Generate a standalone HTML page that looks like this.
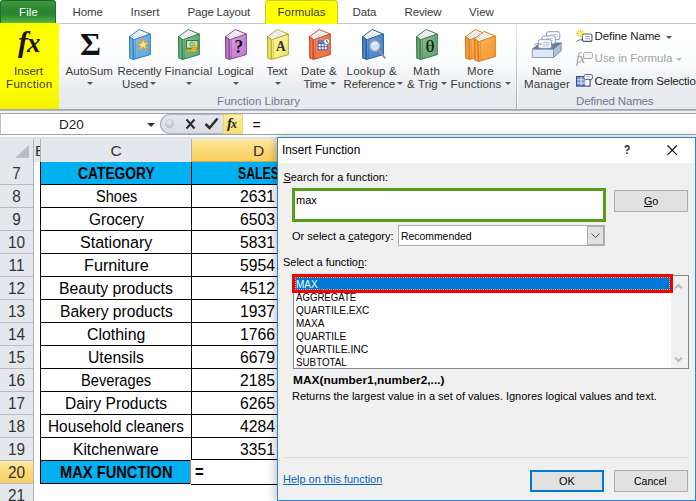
<!DOCTYPE html>
<html lang="en">
<head>
<meta charset="utf-8">
<title>Insert Function</title>
<style>
html,body{margin:0;padding:0;}
body{width:696px;height:501px;overflow:hidden;position:relative;background:#fff;font-family:"Liberation Sans",sans-serif;color:#222;}
.a{position:absolute;}
.t{position:absolute;white-space:nowrap;line-height:1;}
.c{text-align:center;}
/* ---------- tabs ---------- */
#tabs{left:0;top:0;width:696px;height:23px;background:#fff;}
#tabline{left:0;top:23px;width:696px;height:1px;background:#c4c8cc;}
.tab{font-size:11.4px;color:#3b3b3b;top:6px;}
#filetab{left:0;top:0;width:56px;height:23px;border-radius:4px 4px 0 0;background:linear-gradient(#3f9c40 0,#2c8431 45%,#2b8430 62%,#55b446 100%);box-shadow:inset 0 1px 0 #1d6530,inset 1px 0 0 #1f6a2c,inset -1px 0 0 #1f6a2c;}
#formtab{left:265px;top:0;width:73px;height:24px;border-radius:4px 4px 0 0;background:#ffff00;box-shadow:inset 0 1px 0 #c9c93a,inset 1px 0 0 #c9c93a,inset -1px 0 0 #c9c93a;}
/* ---------- ribbon ---------- */
#ribbon{left:0;top:24px;width:696px;height:85px;background:linear-gradient(#ffffff 0,#fbfcfd 45%,#eceef1 70%,#e6e9ed 100%);}
#ribyel{left:0;top:23px;width:59px;height:86px;background:linear-gradient(#ffff00 0,#ffff00 70%,#f2f200 100%);}
#ribbot{left:0;top:109px;width:696px;height:2px;background:linear-gradient(#979ca3,#bfc3c9);}
#ribgap{left:0;top:111px;width:696px;height:3px;background:#eef0f3;}
.rl{font-size:11.4px;color:#3b3b3b;}
.grp{font-size:11.4px;color:#6a7a90;}
.arr{width:0;height:0;border-left:3px solid transparent;border-right:3px solid transparent;border-top:3px solid #555;}
/* ---------- formula bar ---------- */
#fbar{left:0;top:114px;width:696px;height:20px;background:#fff;}
#fbot{left:0;top:134px;width:696px;height:5px;background:#dfe3e8;}
#fbot2{left:0;top:135px;width:696px;height:2px;background:#fbfcfd;}
/* ---------- grid ---------- */
#colhdr{left:0;top:139px;width:277px;height:23px;background:#e4e7eb;}
#rowhdr{left:0;top:162px;width:33px;height:339px;background:#e4e7eb;}
.rh{left:0;width:33px;text-align:center;font-size:15.5px;color:#333;}
.rline{left:0;width:33px;height:1px;background:#b8bcc2;}
.cell{font-size:15.5px;color:#000;}
.hl{background:#000;}
/* ---------- dialog ---------- */
#dlg{left:278px;top:138px;width:417px;height:362px;background:#f0f0f0;box-shadow:0 0 0 1px #2b83d4,0 2px 10px 2px rgba(0,0,0,.28);}
#dtitle{left:278px;top:138px;width:417px;height:25px;background:#fff;}
.d{font-size:11px;color:#000;}
.btn{background:#e1e1e1;border:1px solid #adadad;box-sizing:border-box;}
u{text-decoration:underline;}
</style>
</head>
<body>
<!-- tabs -->
<div id="tabs" class="a"></div>
<div id="tabline" class="a"></div>
<div id="filetab" class="a"></div>
<div id="formtab" class="a"></div>

<!-- ribbon -->
<div id="ribbon" class="a"></div>
<div id="ribyel" class="a"></div>
<div id="ribbot" class="a"></div>
<div id="ribgap" class="a"></div>



<svg width="0" height="0" style="position:absolute">
 <defs>
  <linearGradient id="bg" x1="0" y1="0" x2="1" y2="1"><stop offset="0" stop-color="#fff" stop-opacity=".28"/><stop offset=".55" stop-color="#fff" stop-opacity="0"/><stop offset="1" stop-color="#000" stop-opacity=".12"/></linearGradient>
  <symbol id="book" viewBox="0 0 23 31" preserveAspectRatio="none">
   <polygon points="0.6,7.6 10.6,0.5 22.2,5 5,10.8" fill="#fdfdfd" stroke="var(--o)" stroke-width="1" stroke-linejoin="round"/>
   <path d="M3,7.6 L11,2.2 M5,8.6 L13,3 M8,8.8 L16,3.8" stroke="#b9bcc0" stroke-width=".6" fill="none"/>
   <polygon points="0.5,7.6 4.9,10.8 4.9,30.4 0.8,29.2" fill="var(--s)" stroke="var(--o)" stroke-width="1" stroke-linejoin="round"/>
   <polygon points="4.9,10.8 22.3,5 22.3,25.6 4.9,30.4" fill="var(--f)" stroke="var(--o)" stroke-width="1" stroke-linejoin="round"/>
   <polygon points="4.9,10.8 22.3,5 22.3,25.6 4.9,30.4" fill="url(#bg)"/>
   <path d="M6.8,10.6 L6.8,29.6" stroke="var(--o)" stroke-width=".7" opacity=".6"/>
   <path d="M2.2,9.2 L2.4,29.4" stroke="#fff" stroke-width=".7" opacity=".45"/>
  </symbol>
 </defs>
</svg>
<!-- Insert Function -->
<div class="t" style="left:18px;top:27px;font-family:'Liberation Serif',serif;font-style:italic;font-weight:bold;font-size:30px;color:#15150a;letter-spacing:0px;">f<span style="font-size:27px;margin-left:-1px;">x</span></div>
<!-- AutoSum -->
<div class="t" style="left:80px;top:28px;font-family:'Liberation Serif',serif;font-weight:bold;font-size:32px;color:#111;">&#931;</div>
<!-- Recently Used -->
<svg class="a" style="left:129px;top:29px;--f:#67aede;--s:#4f99d2;--o:#2c7abf" width="22" height="31" viewBox="0 0 23 31" preserveAspectRatio="none"><use href="#book" width="23" height="31"/><polygon points="14.6,9.2 16.4,13.6 21,13.4 17.4,16.4 18.8,21 14.6,18.4 10.6,21.8 11.8,17 8.4,14.6 12.9,14.2" fill="#fdd263" stroke="#e09a1c" stroke-width=".9" stroke-linejoin="round"/><polygon points="14.6,12 15.6,14.6 18,14.6 16,16.2 16.8,18.6 14.6,17.2 12.6,18.8 13.2,16.4 11.4,15.2 13.8,15" fill="#fee79a"/></svg>
<!-- Financial -->
<svg class="a" style="left:178px;top:29px;--f:#66ad76;--s:#4f9c62;--o:#2f7f46" width="22" height="31" viewBox="0 0 23 31" preserveAspectRatio="none"><use href="#book" width="23" height="31"/><rect x="8.8" y="11.6" width="12" height="7.6" fill="#d3ebcc" stroke="#2e7a3e" stroke-width="1.1"/><ellipse cx="14.8" cy="15.4" rx="3" ry="2.2" fill="#9fd094" stroke="#4f9a58" stroke-width=".6"/><rect x="15.2" y="16.6" width="5.2" height="1.9" rx=".6" fill="#f7c64c" stroke="#c98a12" stroke-width=".5"/><rect x="14.2" y="18.6" width="5.6" height="1.9" rx=".6" fill="#f2b430" stroke="#c98a12" stroke-width=".5"/><rect x="13.4" y="20.6" width="5.8" height="1.9" rx=".6" fill="#f7c64c" stroke="#c98a12" stroke-width=".5"/><rect x="9" y="21.2" width="4.2" height="1.8" rx=".6" fill="#f2b430" stroke="#c98a12" stroke-width=".5"/></svg>
<!-- Logical -->
<svg class="a" style="left:225px;top:29px;--f:#c784d2;--s:#a95cb8;--o:#8a429a" width="22" height="31" viewBox="0 0 23 31" preserveAspectRatio="none"><use href="#book" width="23" height="31"/><text x="14.5" y="24" font-family="Liberation Serif,serif" font-weight="bold" font-size="18" text-anchor="middle" fill="#111">?</text></svg>
<!-- Text -->
<svg class="a" style="left:267px;top:29px;--f:#f6f07c;--s:#e2d84a;--o:#b3a624" width="22" height="31" viewBox="0 0 23 31" preserveAspectRatio="none"><use href="#book" width="23" height="31"/><text x="14.5" y="22.5" font-family="Liberation Serif,serif" font-weight="bold" font-size="14" text-anchor="middle" fill="#333">A</text></svg>
<!-- Date & Time -->
<svg class="a" style="left:309px;top:29px;--f:#f0754a;--s:#e05a2c;--o:#d0481c" width="22" height="31" viewBox="0 0 23 31" preserveAspectRatio="none"><use href="#book" width="23" height="31"/><rect x="9.6" y="12" width="9.4" height="8.8" fill="#fff" stroke="#3a56a0" stroke-width=".9"/><rect x="9.6" y="12" width="9.4" height="2.6" fill="#4f7fe0"/><path d="M9.6,14.6H19M9.6,17.7H19M12.7,14.6V20.8M15.9,14.6V20.8" stroke="#3a56a0" stroke-width=".9"/><circle cx="18.6" cy="12.6" r="3.2" fill="#fff" stroke="#666" stroke-width=".8"/><path d="M18.6,10.6V12.8L20.2,13.6" stroke="#111" stroke-width=".8" fill="none"/></svg>
<!-- Lookup & Reference -->
<svg class="a" style="left:362px;top:29px;--f:#4c88ca;--s:#2f6cb4;--o:#245c9e" width="24" height="31" viewBox="0 0 25 31" preserveAspectRatio="none"><use href="#book" width="23" height="31"/><circle cx="13.5" cy="17" r="5.4" fill="#cfe3f7" stroke="#9a9fa8" stroke-width="1.4"/><path d="M10.5,15.5 Q13,13.4 16,14.8" stroke="#fff" stroke-width="1.2" fill="none" opacity=".9"/><path d="M17.6,21.2 L23.6,28.6" stroke="#8e939b" stroke-width="2.1" stroke-linecap="round"/></svg>
<!-- Math & Trig -->
<svg class="a" style="left:416px;top:29px;--f:#6caa74;--s:#4c9058;--o:#3a7c48" width="22" height="31" viewBox="0 0 23 31" preserveAspectRatio="none"><use href="#book" width="23" height="31"/><text x="10" y="23" font-family="Liberation Serif,serif" font-size="17.5" textLength="9.5" lengthAdjust="spacingAndGlyphs" fill="#111">&#952;</text></svg>
<!-- More Functions -->
<svg class="a" style="left:465px;top:29px;--f:#f7a03c;--s:#ee8a1e;--o:#da7a14" width="22" height="31" viewBox="0 0 23 31" preserveAspectRatio="none"><use href="#book" width="23" height="31"/></svg>
<svg class="a" style="left:474px;top:31px;--f:#f7a03c;--s:#ee8a1e;--o:#da7a14" width="22" height="31" viewBox="0 0 23 31" preserveAspectRatio="none"><use href="#book" width="23" height="31"/></svg>
<!-- separator -->
<div class="a" style="left:517px;top:24px;width:1px;height:85px;background:#fff;"></div>
<div class="a" style="left:516px;top:24px;width:1px;height:85px;background:linear-gradient(#e8eaed,#c3c8ce 50%,#a3a9b1);"></div>
<!-- Name Manager -->
<svg class="a" style="left:531px;top:29px;" width="32" height="30" viewBox="0 0 32 30">
 <polygon points="1.3,20.2 8.6,13.9 30.2,13.9 22.5,20.2" fill="#6d819e" stroke="#5f7594" stroke-width=".8" stroke-linejoin="round"/>
 <polygon points="22.5,20.2 30.2,13.9 30.2,21.8 22.5,28.5" fill="#aebfd8" stroke="#6d819e" stroke-width=".8" stroke-linejoin="round"/>
 <rect x="15.5" y="2.7" width="13.3" height="8" rx="2" fill="#fff" stroke="#7f90aa" stroke-width=".9"/>
 <path d="M20,5.4H26.5M20,7.6H26.5" stroke="#a9b5c8" stroke-width=".8"/>
 <rect x="11" y="6.9" width="13.3" height="8" rx="2" fill="#fff" stroke="#7f90aa" stroke-width=".9"/>
 <path d="M15.5,9.6H22M15.5,11.8H22" stroke="#a9b5c8" stroke-width=".8"/>
 <rect x="7.2" y="10.7" width="13.3" height="8.6" rx="2" fill="#fff" stroke="#7f90aa" stroke-width=".9"/>
 <path d="M12,13.4H18.5M12,15.2H18.5M12,17H18.5" stroke="#9fadc2" stroke-width=".8"/>
 <circle cx="9.6" cy="15" r=".9" fill="#7f90aa"/>
 <path d="M3,16 Q5,13.5 8.5,15" stroke="#7f90aa" stroke-width=".8" fill="none"/>
 <polygon points="1.3,20.2 22.5,20.2 22.5,28.5 1.3,28.5" fill="#dfe8f5" stroke="#7387a5" stroke-width=".8" stroke-linejoin="round"/>
</svg>
<!-- Define Name -->
<svg class="a" style="left:576px;top:29px;" width="17" height="15" viewBox="0 0 17 15"><rect x="6.4" y="5" width="9.6" height="7.4" rx="2" fill="#fff" stroke="#4f6180" stroke-width="1.1"/><path d="M9,7.6H14M9,9.8H14" stroke="#8a99b2" stroke-width=".8"/><path d="M.3,12.5 Q3,10.5 6.4,10.6" stroke="#4f6180" stroke-width=".9" fill="none"/><path d="M4.4,.4V8.4M.4,4.4H8.4M1.6,1.6L7.2,7.2M7.2,1.6L1.6,7.2" stroke="#f2c500" stroke-width="1.1"/><circle cx="4.4" cy="4.4" r="1.6" fill="#fff3a0"/></svg>
<!-- Use in Formula -->
<div class="t" style="left:576px;top:52px;font-family:'Liberation Serif',serif;font-style:italic;font-size:14px;color:#9a9a9a;letter-spacing:-1px;">fx</div>
<svg class="a" style="left:583px;top:52px;" width="10" height="8" viewBox="0 0 10 8"><rect x=".5" y=".5" width="9" height="6" rx="1.5" fill="#f4f4f4" stroke="#b0b0b0" stroke-width="1"/></svg>
<!-- Create from Selection -->
<svg class="a" style="left:576px;top:74px;" width="17" height="13" viewBox="0 0 17 13"><rect x=".5" y="2.5" width="13.5" height="9.5" fill="#6d8fd0" stroke="#3b4f8a" stroke-width=".9"/><rect x="9.5" y="5.8" width="4.5" height="6.2" fill="#fff"/><path d="M.5,5.8H14M.5,9H14M5,2.5V12M9.5,2.5V12" stroke="#eef2fa" stroke-width=".9"/><rect x=".5" y="2.5" width="13.5" height="9.5" fill="none" stroke="#3b4f8a" stroke-width=".9"/><rect x="8" y=".6" width="8.4" height="5" rx="1.6" fill="#fff" stroke="#4f6180" stroke-width="1"/><path d="M10,2.4H14.5M10,4H14.5" stroke="#9fadc2" stroke-width=".6"/></svg>


<div class="t rl" style="left:14.1px;top:66px;font-size:11.5px;letter-spacing:0.007px;">Insert</div>
<div class="t rl" style="left:6.1px;top:79px;font-size:11.5px;letter-spacing:0.274px;">Function</div>
<div class="t rl" style="left:65.6px;top:66px;font-size:11.5px;letter-spacing:-0.000px;">AutoSum</div>
<div class="t rl" style="left:117.6px;top:66px;font-size:11.5px;letter-spacing:-0.118px;">Recently</div>
<div class="t rl" style="left:122.1px;top:79px;font-size:11.5px;letter-spacing:-0.261px;">Used</div>
<div class="t rl" style="left:164.6px;top:66px;font-size:11.5px;letter-spacing:0.198px;">Financial</div>
<div class="t rl" style="left:217.6px;top:66px;font-size:11.5px;letter-spacing:-0.092px;">Logical</div>
<div class="t rl" style="left:266.6px;top:66px;font-size:11.5px;letter-spacing:-0.197px;">Text</div>
<div class="t rl" style="left:301.1px;top:66px;font-size:11.5px;letter-spacing:0.107px;">Date &amp;</div>
<div class="t rl" style="left:303.6px;top:79px;font-size:11.5px;letter-spacing:-0.457px;">Time</div>
<div class="t rl" style="left:346.6px;top:66px;font-size:11.5px;letter-spacing:0.214px;">Lookup &amp;</div>
<div class="t rl" style="left:343.6px;top:79px;font-size:11.5px;letter-spacing:-0.195px;">Reference</div>
<div class="t rl" style="left:413.1px;top:66px;font-size:11.5px;letter-spacing:0.434px;">Math</div>
<div class="t rl" style="left:407.1px;top:79px;font-size:11.5px;letter-spacing:0.128px;">&amp; Trig</div>
<div class="t rl" style="left:467.1px;top:66px;font-size:11.5px;letter-spacing:0.150px;">More</div>
<div class="t rl" style="left:450.6px;top:79px;font-size:11.5px;letter-spacing:0.105px;">Functions</div>
<div class="t rl" style="left:532.1px;top:66px;font-size:11.5px;letter-spacing:-0.344px;">Name</div>
<div class="t rl" style="left:524.1px;top:79px;font-size:11.5px;letter-spacing:0.059px;">Manager</div>
<div class="t rl" style="left:594.6px;top:31px;font-size:11.5px;letter-spacing:-0.119px;color:#222;">Define Name</div>
<div class="t rl" style="left:594.6px;top:53px;font-size:11.5px;letter-spacing:-0.012px;color:#a3a3a3;">Use in Formula</div>
<div class="t rl" style="left:594.6px;top:76px;font-size:11.5px;letter-spacing:-0.186px;color:#222;">Create from Selection</div>
<div class="t grp" style="left:217.1px;top:96px;font-size:11.5px;letter-spacing:0.022px;">Function Library</div>
<div class="t grp" style="left:576.1px;top:96px;font-size:11.5px;letter-spacing:-0.150px;">Defined Names</div>
<div class="t tab" style="left:19.1px;top:7px;font-size:11.5px;letter-spacing:0.068px;color:#fff;">File</div>
<div class="t tab" style="left:72.6px;top:7px;font-size:11.5px;letter-spacing:-0.094px;">Home</div>
<div class="t tab" style="left:130.6px;top:7px;font-size:11.5px;letter-spacing:0.007px;">Insert</div>
<div class="t tab" style="left:187.6px;top:7px;font-size:11.5px;letter-spacing:-0.207px;">Page Layout</div>
<div class="t tab" style="left:277.6px;top:7px;font-size:11.5px;letter-spacing:-0.015px;">Formulas</div>
<div class="t tab" style="left:352.6px;top:7px;font-size:11.5px;letter-spacing:-0.123px;">Data</div>
<div class="t tab" style="left:404.6px;top:7px;font-size:11.5px;letter-spacing:-0.151px;">Review</div>
<div class="t tab" style="left:469.1px;top:7px;font-size:11.5px;letter-spacing:0.021px;">View</div>
<div class="a arr" style="left:86.5px;top:82px;"></div>
<div class="a arr" style="left:150px;top:82px;"></div>
<div class="a arr" style="left:185.5px;top:82px;"></div>
<div class="a arr" style="left:232.5px;top:82px;"></div>
<div class="a arr" style="left:274.5px;top:82px;"></div>
<div class="a arr" style="left:329.5px;top:82px;"></div>
<div class="a arr" style="left:396.5px;top:82px;"></div>
<div class="a arr" style="left:441px;top:82px;"></div>
<div class="a arr" style="left:504.5px;top:82px;"></div>
<div class="a arr" style="left:665.5px;top:35.5px;"></div>
<div class="a arr" style="left:675.5px;top:57.5px;border-top-color:#b8b8b8;"></div>
<!-- formula bar -->
<div id="fbar" class="a"></div>
<div id="fbot" class="a"></div>
<div id="fbot2" class="a"></div>
<div class="a" style="left:0;top:113px;width:696px;height:1px;background:#9fa4ab;"></div>
<div class="a" style="left:0;top:134px;width:696px;height:1px;background:#9fa4ab;"></div>
<div class="a" style="left:0;top:113px;width:1px;height:22px;background:#b9bdc4;"></div>


<div class="t" style="left:59px;top:118px;font-size:13.5px;color:#222;">D20</div>
<div class="a arr" style="left:147px;top:123px;border-top-color:#333;border-left-width:4px;border-right-width:4px;border-top-width:4px;"></div>
<div class="a" style="left:160px;top:114px;width:66px;height:20px;border-radius:10px 0 0 10px;background:linear-gradient(#e4e7eb,#d9dde2);box-shadow:inset 1px 0 0 #9fa5ad,inset 0 1px 0 #b4b9c0,inset 0 -1px 0 #b4b9c0;"></div>
<div class="a" style="left:165px;top:119px;width:9px;height:9px;border-radius:50%;background:radial-gradient(circle at 45% 35%,#e9ebee,#a9adb5);"></div>
<svg class="a" style="left:185px;top:118px;" width="11" height="12" viewBox="0 0 11 12"><path d="M1.5,1.5 L9.5,10.5 M9.5,1.5 L1.5,10.5" stroke="#2b2b2b" stroke-width="2" fill="none"/></svg>
<svg class="a" style="left:204px;top:117px;" width="15" height="13" viewBox="0 0 15 13"><path d="M1.5,7 L5.5,11 L13.5,1.5" stroke="#2b2b2b" stroke-width="2.5" fill="none"/></svg>
<div class="a" style="left:223px;top:114px;width:20px;height:20px;background:linear-gradient(#fdf0ae,#fbdc68);box-shadow:inset 0 0 0 1px #f3d574;"></div>
<div class="t" style="left:227px;top:116px;font-family:'Liberation Serif',serif;font-style:italic;font-weight:bold;font-size:15px;color:#222;letter-spacing:-1px;">f<span style="font-size:12px">x</span></div>
<div class="t" style="left:252.5px;top:118px;font-size:14px;color:#111;">=</div>


<!-- grid -->
<div id="colhdr" class="a"></div>
<div id="rowhdr" class="a"></div>
<div class="a" style="left:33px;top:139px;width:1px;height:23px;background:#aeb3ba;"></div>
<div class="a" style="left:40px;top:139px;width:1px;height:23px;background:#aeb3ba;"></div>
<div class="a" style="left:191px;top:139px;width:1px;height:23px;background:#aeb3ba;"></div>
<div class="a" style="left:192px;top:139px;width:85px;height:22px;background:linear-gradient(#fde9a6,#fbd977 50%,#f9d062);"></div>
<div class="a" style="left:192px;top:161px;width:85px;height:1px;background:#e0a646;"></div>
<svg class="a" style="left:15px;top:145px;" width="15" height="14" viewBox="0 0 15 14"><polygon points="14,0 14,13 0,13" fill="#b9bec6"/></svg>
<div class="a" style="left:34px;top:139px;width:6px;height:22px;overflow:hidden;"><div class="t" style="left:1px;top:4px;font-size:15.5px;color:#333;">B</div></div>
<div class="t c" style="left:41px;width:150px;top:143px;font-size:15.5px;color:#333;">C</div>
<div class="t" style="left:253px;top:143px;font-size:15.5px;color:#333;">D</div>
<div class="t rh" style="top:165px;font-size:16.5px;transform:scaleX(.93);">7</div>
<div class="a rline" style="top:184px;"></div>
<div class="t rh" style="top:188px;font-size:16.5px;transform:scaleX(.93);">8</div>
<div class="a rline" style="top:207px;"></div>
<div class="t rh" style="top:211px;font-size:16.5px;transform:scaleX(.93);">9</div>
<div class="a rline" style="top:230px;"></div>
<div class="t rh" style="top:234px;font-size:16.5px;transform:scaleX(.93);">10</div>
<div class="a rline" style="top:253px;"></div>
<div class="t rh" style="top:257px;font-size:16.5px;transform:scaleX(.93);">11</div>
<div class="a rline" style="top:276px;"></div>
<div class="t rh" style="top:280px;font-size:16.5px;transform:scaleX(.93);">12</div>
<div class="a rline" style="top:299px;"></div>
<div class="t rh" style="top:303px;font-size:16.5px;transform:scaleX(.93);">13</div>
<div class="a rline" style="top:322px;"></div>
<div class="t rh" style="top:326px;font-size:16.5px;transform:scaleX(.93);">14</div>
<div class="a rline" style="top:345px;"></div>
<div class="t rh" style="top:349px;font-size:16.5px;transform:scaleX(.93);">15</div>
<div class="a rline" style="top:368px;"></div>
<div class="t rh" style="top:372px;font-size:16.5px;transform:scaleX(.93);">16</div>
<div class="a rline" style="top:391px;"></div>
<div class="t rh" style="top:395px;font-size:16.5px;transform:scaleX(.93);">17</div>
<div class="a rline" style="top:414px;"></div>
<div class="t rh" style="top:418px;font-size:16.5px;transform:scaleX(.93);">18</div>
<div class="a rline" style="top:437px;"></div>
<div class="t rh" style="top:441px;font-size:16.5px;transform:scaleX(.93);">19</div>
<div class="a rline" style="top:460px;"></div>
<div class="a" style="left:0;top:461px;width:33px;height:22px;background:linear-gradient(#fde9a6,#fbd977 50%,#f9d062);"></div>
<div class="t rh" style="top:464px;font-size:16.5px;transform:scaleX(.93);">20</div>
<div class="a rline" style="top:483px;"></div>
<div class="t rh" style="top:487px;font-size:16.5px;transform:scaleX(.93);">21</div>
<div class="a rline" style="top:506px;"></div>
<div class="a" style="left:33px;top:162px;width:1px;height:339px;background:#aeb3ba;"></div>
<div class="a" style="left:41px;top:162px;width:236px;height:22px;background:#00b0f0;"></div>
<div class="a" style="left:41px;top:461px;width:150px;height:22px;background:#00b0f0;"></div>
<div class="a hl" style="left:40px;top:162px;width:1px;height:322px;"></div>
<div class="a hl" style="left:191px;top:162px;width:1px;height:298px;"></div>
<div class="a hl" style="left:40px;top:184px;width:237px;height:1px;"></div>
<div class="a hl" style="left:40px;top:207px;width:237px;height:1px;"></div>
<div class="a hl" style="left:40px;top:230px;width:237px;height:1px;"></div>
<div class="a hl" style="left:40px;top:253px;width:237px;height:1px;"></div>
<div class="a hl" style="left:40px;top:276px;width:237px;height:1px;"></div>
<div class="a hl" style="left:40px;top:299px;width:237px;height:1px;"></div>
<div class="a hl" style="left:40px;top:322px;width:237px;height:1px;"></div>
<div class="a hl" style="left:40px;top:345px;width:237px;height:1px;"></div>
<div class="a hl" style="left:40px;top:368px;width:237px;height:1px;"></div>
<div class="a hl" style="left:40px;top:391px;width:237px;height:1px;"></div>
<div class="a hl" style="left:40px;top:414px;width:237px;height:1px;"></div>
<div class="a hl" style="left:40px;top:437px;width:237px;height:1px;"></div>
<div class="a hl" style="left:40px;top:460px;width:237px;height:1px;"></div>
<div class="a hl" style="left:40px;top:483px;width:237px;height:1px;"></div>
<div class="a" style="left:191px;top:459px;width:87px;height:26px;background:#fff;border-top:1px solid #000;border-bottom:1px solid #000;box-sizing:border-box;"></div>
<div class="a" style="left:190px;top:460px;width:1px;height:24px;background:#e8742a;"></div>
<div class="t" style="left:77.5px;top:165px;font-size:16.5px;color:#000;font-weight:bold;transform:scaleX(0.8378);transform-origin:0 0;">CATEGORY</div>
<div class="t" style="left:237.5px;top:165px;font-size:16.5px;color:#000;font-weight:bold;transform:scaleX(0.7453);transform-origin:0 0;">SALES</div>
<div class="t" style="left:95.6px;top:188px;font-size:16.3px;color:#000;transform:scaleX(0.8958);transform-origin:0 0;">Shoes</div>
<div class="t" style="left:240.1px;top:188px;font-size:16.5px;color:#000;transform:scaleX(0.9509);transform-origin:0 0;">2631</div>
<div class="t" style="left:88.8px;top:211px;font-size:16.3px;color:#000;transform:scaleX(0.9489);transform-origin:0 0;">Grocery</div>
<div class="t" style="left:240.1px;top:211px;font-size:16.5px;color:#000;transform:scaleX(0.9509);transform-origin:0 0;">6503</div>
<div class="t" style="left:80.1px;top:234px;font-size:16.3px;color:#000;transform:scaleX(0.9866);transform-origin:0 0;">Stationary</div>
<div class="t" style="left:240.1px;top:234px;font-size:16.5px;color:#000;transform:scaleX(0.9509);transform-origin:0 0;">5831</div>
<div class="t" style="left:83.9px;top:257px;font-size:16.3px;color:#000;transform:scaleX(0.9936);transform-origin:0 0;">Furniture</div>
<div class="t" style="left:240.1px;top:257px;font-size:16.5px;color:#000;transform:scaleX(0.9509);transform-origin:0 0;">5954</div>
<div class="t" style="left:59.3px;top:280px;font-size:16.3px;color:#000;transform:scaleX(0.9670);transform-origin:0 0;">Beauty products</div>
<div class="t" style="left:240.1px;top:280px;font-size:16.5px;color:#000;transform:scaleX(0.9509);transform-origin:0 0;">4512</div>
<div class="t" style="left:59.9px;top:303px;font-size:16.3px;color:#000;transform:scaleX(0.9578);transform-origin:0 0;">Bakery products</div>
<div class="t" style="left:240.1px;top:303px;font-size:16.5px;color:#000;transform:scaleX(0.9509);transform-origin:0 0;">1937</div>
<div class="t" style="left:87.1px;top:326px;font-size:16.3px;color:#000;transform:scaleX(0.9766);transform-origin:0 0;">Clothing</div>
<div class="t" style="left:240.1px;top:326px;font-size:16.5px;color:#000;transform:scaleX(0.9509);transform-origin:0 0;">1766</div>
<div class="t" style="left:88.4px;top:349px;font-size:16.3px;color:#000;transform:scaleX(0.9625);transform-origin:0 0;">Utensils</div>
<div class="t" style="left:240.1px;top:349px;font-size:16.5px;color:#000;transform:scaleX(0.9509);transform-origin:0 0;">6679</div>
<div class="t" style="left:81.2px;top:372px;font-size:16.3px;color:#000;transform:scaleX(0.9009);transform-origin:0 0;">Beverages</div>
<div class="t" style="left:240.1px;top:372px;font-size:16.5px;color:#000;transform:scaleX(0.9509);transform-origin:0 0;">2185</div>
<div class="t" style="left:65.2px;top:395px;font-size:16.3px;color:#000;transform:scaleX(0.9552);transform-origin:0 0;">Dairy Products</div>
<div class="t" style="left:240.1px;top:395px;font-size:16.5px;color:#000;transform:scaleX(0.9509);transform-origin:0 0;">6265</div>
<div class="t" style="left:48.3px;top:418px;font-size:16.3px;color:#000;transform:scaleX(0.9440);transform-origin:0 0;">Household cleaners</div>
<div class="t" style="left:240.1px;top:418px;font-size:16.5px;color:#000;transform:scaleX(0.9509);transform-origin:0 0;">4284</div>
<div class="t" style="left:73.4px;top:441px;font-size:16.3px;color:#000;transform:scaleX(0.9555);transform-origin:0 0;">Kitchenware</div>
<div class="t" style="left:240.1px;top:441px;font-size:16.5px;color:#000;transform:scaleX(0.9509);transform-origin:0 0;">3351</div>
<div class="t" style="left:59.8px;top:464px;font-size:16.5px;color:#000;font-weight:bold;transform:scaleX(0.8894);transform-origin:0 0;">MAX FUNCTION</div>
<div class="t" style="left:194.9px;top:462px;font-size:19px;color:#000;font-weight:bold;transform:scaleX(0.7750);transform-origin:0 0;">=</div>
<!-- dialog -->
<div id="dlg" class="a"></div>
<div id="dtitle" class="a"></div>
<svg class="a" style="left:667px;top:145px;" width="10.4" height="10.4" viewBox="0 0 11 11"><path d="M.5,.5L10.5,10.5M10.5,.5L.5,10.5" stroke="#111" stroke-width="1.25"/></svg>
<div class="a" style="left:292px;top:188px;width:314px;height:34px;box-sizing:border-box;border:3px solid #569d1c;background:#fff;"></div>
<div class="a btn" style="left:614px;top:190px;width:74px;height:22px;"></div>
<div class="a" style="left:398px;top:225px;width:207px;height:21px;box-sizing:border-box;border:1px solid #adadad;background:#fff;"></div>
<div class="a" style="left:587px;top:226px;width:17px;height:19px;background:#e1e1e1;box-shadow:inset 0 0 0 1px #adadad;"></div>
<svg class="a" style="left:591px;top:233px;" width="9" height="6" viewBox="0 0 9 6"><path d="M.5,.5L4.5,4.5L8.5,.5" stroke="#444" stroke-width="1" fill="none"/></svg>
<div class="a" style="left:293px;top:275px;width:396px;height:94px;box-sizing:border-box;border:1px solid #828790;background:#fff;"></div>
<div class="a" style="left:671px;top:276px;width:17px;height:92px;background:#f0f0f0;"></div>
<svg class="a" style="left:674px;top:283px;" width="9" height="6" viewBox="0 0 9 6"><path d="M1.2,5.2L4.5,1.9L7.8,5.2" stroke="#b9b9b9" stroke-width="2.1" fill="none"/></svg>
<svg class="a" style="left:674px;top:357px;" width="9" height="6" viewBox="0 0 9 6"><path d="M1.2,.8L4.5,4.1L7.8,.8" stroke="#b9b9b9" stroke-width="2.1" fill="none"/></svg>
<div class="a" style="left:292px;top:274px;width:381px;height:19px;box-sizing:border-box;border:3px solid #f80000;background:#0078d7;"></div>
<div class="a" style="left:295px;top:277px;width:375px;height:13px;box-sizing:border-box;border:1px dotted #f0a040;"></div>
<div class="a" style="left:284px;top:457px;width:405px;height:1px;background:#dcdcdc;"></div>
<div class="a btn" style="left:530px;top:470px;width:74px;height:22px;border:2px solid #0078d7;"></div>
<div class="a btn" style="left:614px;top:470px;width:74px;height:22px;"></div>

<div class="t" style="left:281.6px;top:144px;font-size:12.3px;color:#000;transform:scaleX(0.9625);transform-origin:0 0;">Insert Function</div>
<div class="t" style="left:623.9px;top:143px;font-size:13.5px;color:#222;font-weight:bold;transform:scaleX(0.7519);transform-origin:0 0;">?</div>
<div class="t" style="left:283.4px;top:172px;font-size:11px;color:#000;transform:scaleX(1.0000);transform-origin:0 0;"><u>S</u>earch for a function:</div>
<div class="t" style="left:296.4px;top:195px;font-size:11px;color:#000;transform:scaleX(1.0010);transform-origin:0 0;">max</div>
<div class="t" style="left:643.6px;top:196px;font-size:11px;color:#000;transform:scaleX(0.9746);transform-origin:0 0;"><u>G</u>o</div>
<div class="t" style="left:292.1px;top:231px;font-size:11px;color:#000;transform:scaleX(1.0007);transform-origin:0 0;">Or select a <u>c</u>ategory:</div>
<div class="t" style="left:401.2px;top:231px;font-size:11px;color:#000;transform:scaleX(0.9452);transform-origin:0 0;">Recommended</div>
<div class="t" style="left:283.1px;top:257px;font-size:11px;color:#000;transform:scaleX(0.9961);transform-origin:0 0;">Select a functio<u>n</u>:</div>
<div class="t" style="left:296.4px;top:279px;font-size:11px;color:#fff;transform:scaleX(0.9040);transform-origin:0 0;">MAX</div>
<div class="t" style="left:296.4px;top:292px;font-size:11px;color:#000;transform:scaleX(0.8756);transform-origin:0 0;">AGGREGATE</div>
<div class="t" style="left:296.4px;top:305px;font-size:11px;color:#000;transform:scaleX(0.9107);transform-origin:0 0;">QUARTILE.EXC</div>
<div class="t" style="left:296.4px;top:318px;font-size:11px;color:#000;transform:scaleX(0.9078);transform-origin:0 0;">MAXA</div>
<div class="t" style="left:296.4px;top:331px;font-size:11px;color:#000;transform:scaleX(0.9177);transform-origin:0 0;">QUARTILE</div>
<div class="t" style="left:296.4px;top:344px;font-size:11px;color:#000;transform:scaleX(0.9413);transform-origin:0 0;">QUARTILE.INC</div>
<div class="t" style="left:296.4px;top:357px;font-size:11px;color:#000;transform:scaleX(0.8904);transform-origin:0 0;">SUBTOTAL</div>
<div class="t" style="left:293.2px;top:375px;font-size:11px;color:#000;font-weight:bold;transform:scaleX(1.0825);transform-origin:0 0;">MAX(number1,number2,...)</div>
<div class="t" style="left:292.2px;top:391px;font-size:11px;color:#000;transform:scaleX(0.9994);transform-origin:0 0;">Returns the largest value in a set of values. Ignores logical values and text.</div>
<div class="t" style="left:283.1px;top:474px;font-size:11px;color:#0563c1;transform:scaleX(0.9963);transform-origin:0 0;"><u>Help on this function</u></div>
<div class="t" style="left:559.1px;top:476px;font-size:11px;color:#000;transform:scaleX(0.9941);transform-origin:0 0;">OK</div>
<div class="t" style="left:634.1px;top:476px;font-size:11px;color:#000;transform:scaleX(0.9521);transform-origin:0 0;">Cancel</div>
</body>
</html>
